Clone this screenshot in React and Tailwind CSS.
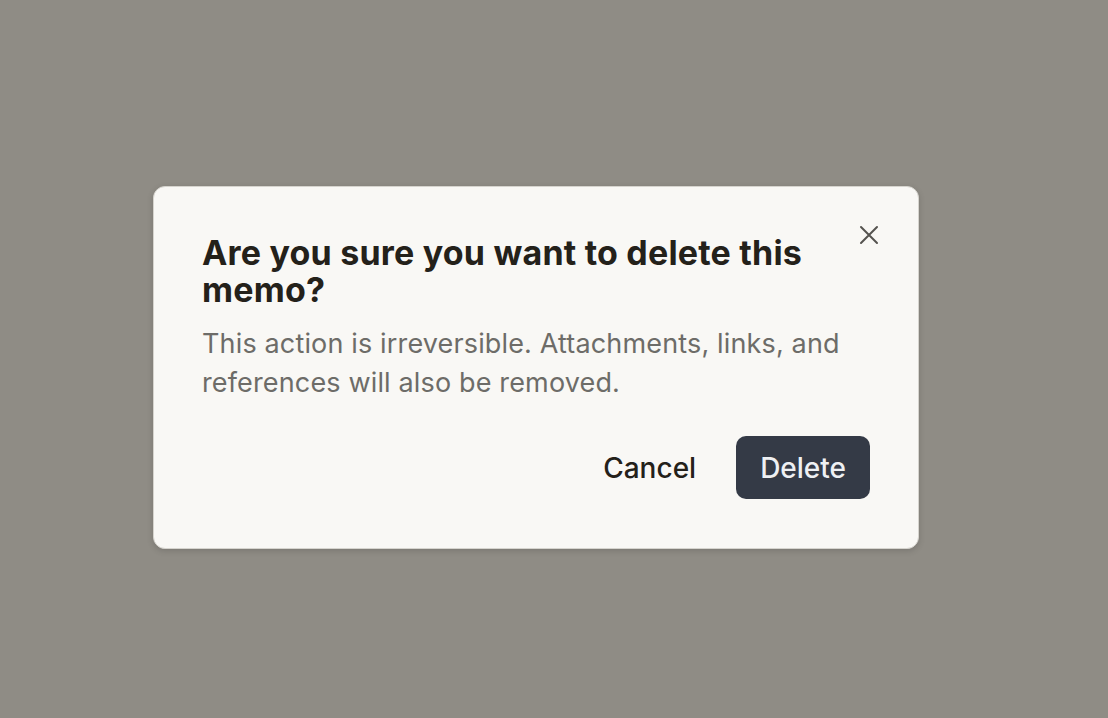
import React from "react";

export default function App() {
  return (
    <div
      className="w-[1108px] h-[718px] bg-[#8f8c85] flex items-start pl-[153px] pt-[186px]"
      style={{ fontFamily: "Inter, 'Noto Sans', sans-serif" }}
    >
      <div className="relative w-[766px] rounded-xl border border-[#d6d4ce] bg-[#f9f8f5] px-[48px] pt-[47px] pb-[49px] shadow-[0_2px_6px_rgba(0,0,0,0.15)]">
        <button className="absolute right-[39px] top-[38px] text-[#55534f]">
          <svg width="20" height="20" viewBox="0 0 20 20" fill="none" stroke="currentColor" strokeWidth="2" strokeLinecap="round">
            <path d="M2 2l16 16M18 2L2 18" />
          </svg>
        </button>
        <h2 className="pr-[40px] text-[34px] leading-[37px] font-bold tracking-[0.2px] text-[#24211a]">
          Are you sure you want to delete this memo?
        </h2>
        <p className="mt-[16px] text-[27px] leading-[39px] tracking-[0.15px] text-[#6d6c68]">
          This action is irreversible. Attachments, links, and references will also be removed.
        </p>
        <div className="mt-[34px] flex justify-end gap-4">
          <button className="h-[63px] px-[24px] rounded-[10px] text-[28px] font-medium text-[#24211a]">
            Cancel
          </button>
          <button className="h-[63px] px-[24px] rounded-[10px] bg-[#343a46] text-[28px] font-medium text-[#eef0f3]">
            Delete
          </button>
        </div>
      </div>
    </div>
  );
}
